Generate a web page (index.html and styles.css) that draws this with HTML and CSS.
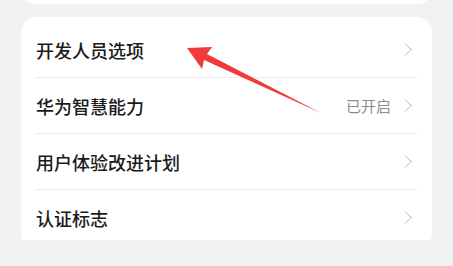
FILE: index.html
```html
<!DOCTYPE html>
<html lang="zh-CN">
<head>
    <meta charset="UTF-8">
    <meta name="viewport" content="width=device-width, initial-scale=1.0">
    <title>系统设置</title>
    <link rel="stylesheet" href="styles.css">
</head>
<body>
    <div class="page">
        <div class="card card-prev"></div>

        <div class="card">
            <div class="row">
                <span class="label">开发人员选项</span>
                <span class="chevron"></span>
            </div>
            <div class="row">
                <span class="label">华为智慧能力</span>
                <span class="value">已开启</span>
                <span class="chevron"></span>
            </div>
            <div class="row">
                <span class="label">用户体验改进计划</span>
                <span class="chevron"></span>
            </div>
            <div class="row">
                <span class="label">认证标志</span>
                <span class="chevron"></span>
            </div>
        </div>

        <!-- annotation arrow pointing at the first row -->
        <svg class="pointer" width="453" height="266" viewBox="0 0 453 266">
            <polygon points="187,74 212,73 207,80 321,139 204,86 202,95" fill="#ef3b3b"/>
        </svg>
    </div>
</body>
</html>
```

FILE: styles.css
```css
body {
    margin: 0;
    background-color: #f1f2f4;
    font-family: "Noto Sans CJK SC", "Noto Sans", sans-serif;
    overflow: hidden;
}
.page {
    position: relative;
    padding: 0 21px;
    height: 266px;
}
.card {
    background: #fff;
    border-radius: 16px;
    padding: 5px 14px 4px;
    margin-top: 13px;
}
.card-prev {
    height: 30px;
    padding: 0;
    margin-top: -26px;
}
.row {
    display: flex;
    align-items: center;
    height: 55px;
    border-bottom: 1px solid #ececec;
}
.row:last-child {
    border-bottom: none;
}
.label {
    flex: 1;
    font-size: 18px;
    font-weight: 500;
    color: #1b1b1b;
    padding-left: 1px;
}
.value {
    font-size: 15px;
    color: #8c8c8c;
    margin-right: 10px;
}
.chevron {
    width: 8px;
    height: 8px;
    border-top: 1.5px solid #c6c6c6;
    border-right: 1.5px solid #c6c6c6;
    transform: rotate(45deg);
    margin-right: 8px;
}
.pointer {
    position: absolute;
    left: 0;
    top: 0;
}
```
